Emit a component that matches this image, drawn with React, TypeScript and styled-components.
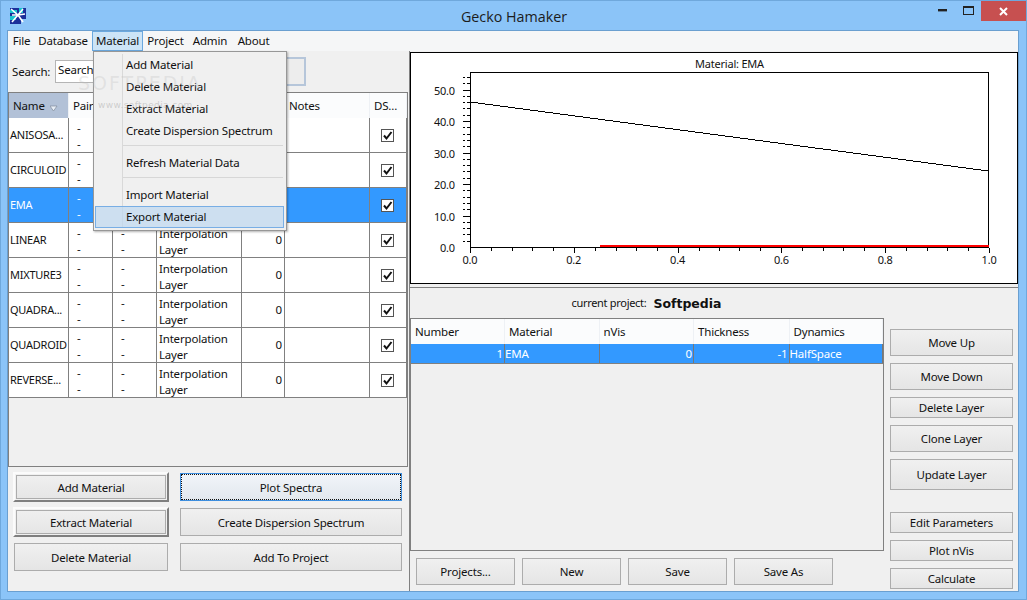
import React from "react";
import styled, { createGlobalStyle } from "styled-components";

const Global = createGlobalStyle`
  html, body { margin: 0; padding: 0; background: #8bc4f8; }
  * { box-sizing: border-box; }
`;

const Window = styled.div`
  width: 1027px; height: 600px; overflow: hidden; position: relative;
  display: flex; flex-direction: column;
  background: #8bc4f8;
  border: 1px solid #6fa8dc;
  font-family: "Noto Sans", Tahoma, sans-serif;
  font-size: 11.5px;
  letter-spacing: -0.18px;
  color: #111;
`;
const TitleBar = styled.div`
  height: 29px; flex: none;
  display: grid; grid-template-columns: 1fr auto 1fr; align-items: center;
  padding-left: 9px;
`;
const TitleText = styled.div`
  font-family: "Open Sans", sans-serif; font-size: 14.3px; letter-spacing: 0; color: #1c1c1c; padding-top: 1px; margin-right: 8px;
`;
const Controls = styled.div`
  justify-self: end; align-self: start; display: flex; align-items: flex-start;
`;
const CtrlIcon = styled.div`
  width: 26px; height: 19px; display: flex; align-items: center; justify-content: center;
`;
const CloseBtn = styled.div`
  width: 45px; height: 20px; background: #c75050; display: flex; align-items: center; justify-content: center;
`;
const Client = styled.div`
  width: 1012px; height: 562px; margin-left: 6px; flex: none;
  border: 1px solid #6a9fd0; background: #f0f0f0;
  display: flex; flex-direction: column;
`;
const MenuBar = styled.div`
  height: 20px; flex: none; background: #f5f6f7; display: flex; align-items: stretch; padding-left: 1px;
`;
const MenuTitle = styled.div<{ $open?: boolean; $w: number }>`
  width: ${(p) => p.$w}px; display: flex; align-items: center; justify-content: center; padding-bottom: 1px;
  background: ${(p) => (p.$open ? "#cce4f7" : "transparent")};
  border: 1px solid ${(p) => (p.$open ? "#6ba8de" : "transparent")};
`;
const Main = styled.div`
  flex: 1; display: flex; min-height: 0;
`;
const LeftPane = styled.div`
  width: 402px; flex: none; display: flex; flex-direction: column;
  border-right: 1px solid #808080;
`;
const SearchRow = styled.div`
  height: 41px; flex: none; display: flex; align-items: center; padding: 0 0 0 4px;
`;
const SearchLabel = styled.span`
  width: 43px;
`;
const SearchInput = styled.div`
  width: 195px; height: 23px; background: #fff; border: 1px solid #b5b5b5; padding: 1px 2px; line-height: 16px;
`;
const SearchButton = styled.div`
  width: 56px; height: 29px; border: 2px solid #b6c6da; background: #ededed;
`;
const TableFrame = styled.div`
  width: 400px; height: 375px; flex: none; border: 1px solid #808080; display: flex; flex-direction: column;
`;
const COLS = "60px 44px 44px 85px 43px 85px 37px";
const HeadRow = styled.div`
  height: 25px; flex: none; display: grid; grid-template-columns: ${COLS}; background: #f0f2f5;
`;
const HeadCell = styled.div<{ $sorted?: boolean }>`
  display: flex; align-items: center; gap: 5px; padding-left: 4px; white-space: nowrap; overflow: hidden;
  background: ${(p) => (p.$sorted ? "#b2c1d7" : "#fbfcfd")};
  border-right: 1px solid #eef1f5;
`;
const SortArrow = styled.svg`
  margin-top: 5px; flex: none;
`;
const Row = styled.div<{ $sel?: boolean }>`
  height: 35px; flex: none; display: grid; grid-template-columns: ${COLS};
  background: ${(p) => (p.$sel ? "#3399ff" : "#fff")};
  color: ${(p) => (p.$sel ? "#fff" : "#111")};
  border-bottom: 1px solid #808080;
`;
const Cell = styled.div<{ $align?: string }>`
  border-right: 1px solid #808080;
  display: flex; align-items: center; overflow: hidden; white-space: nowrap;
  justify-content: ${(p) => p.$align || "flex-start"};
  padding: 0 2px 2px 1px;
`;
const NameCell = styled(Cell)`
  font-size: 11px; letter-spacing: -0.25px;
`;
const DashCell = styled(Cell)`
  flex-direction: column; align-items: flex-start; justify-content: center; padding: 1px 0 0 8px; line-height: 16px;
`;
const TypeCell = styled(Cell)`
  white-space: normal; line-height: 16px; padding: 4px 0 0 2px;
`;
const Check = styled.div`
  width: 13px; height: 13px; background: #fff; border: 1px solid #555; display: flex; align-items: center; justify-content: center; margin-top: 2px;
`;
const BtnCol = styled.div<{ $w: number; $top?: number }>`
  width: ${(p) => p.$w}px; padding-top: ${(p) => p.$top ?? 0}px; display: flex; flex-direction: column; align-items: center;
`;
const Btn = styled.div<{ $h: number; $w?: number; $variant?: string; $after?: number }>`
  height: ${(p) => p.$h}px; width: ${(p) => (p.$w ? p.$w + "px" : "100%")}; flex: none;
  margin-bottom: ${(p) => p.$after ?? 0}px;
  display: flex; align-items: center; justify-content: center; white-space: nowrap; padding-bottom: 1px;
  background: ${(p) => (p.$variant === "focus" ? "linear-gradient(#f1f5f9,#e2e8ee)" : "linear-gradient(#f0f0f0,#e5e5e5)")};
  border: 1px solid ${(p) => (p.$variant === "focus" ? "#3e8ede" : "#acacac")};
  ${(p) => p.$variant === "raised" && `
    border: 2px solid;
    border-color: #fbfbfb #7f7f7f #7f7f7f #fbfbfb;
    box-shadow: inset 0 0 0 1px #f0f0f0, inset 0 0 0 2px #acacac;
  `}
  ${(p) => p.$variant === "focus" && `outline: 1px dotted #111; outline-offset: -2px;`}
`;
const LeftButtons = styled.div`
  flex: 1; display: flex; gap: 11px; padding: 5px 0 0 5px;
  ${Btn} { padding-bottom: 0; }
`;
const RightPane = styled.div`
  flex: 1; display: flex; flex-direction: column; min-width: 0;
`;
const PlotPanel = styled.div`
  height: 237px; flex: none; padding-top: 1px; border-bottom: 1px solid #808080;
`;
const PlotBox = styled.div`
  height: 232px; background: #fff; border: 1px solid #000; overflow: hidden; display: flex;
`;
const Lower = styled.div`
  flex: 1; display: flex; flex-direction: column;
`;
const ProjectLine = styled.div`
  height: 30px; flex: none; display: flex; align-items: center; justify-content: center; gap: 7px; padding-right: 135px;
`;
const ProjectSmall = styled.span`
  font-size: 11px; letter-spacing: -0.3px; padding-bottom: 2px;
`;
const ProjectName = styled.span`
  font-size: 12.5px; font-weight: 700; font-family: "DejaVu Sans", sans-serif; letter-spacing: 0;
`;
const LowerBody = styled.div`
  flex: 1; display: flex;
`;
const LowerLeft = styled.div`
  width: 474px; flex: none; display: flex; flex-direction: column;
`;
const LayerFrame = styled.div`
  height: 233px; flex: none; border: 1px solid #808080; display: flex; flex-direction: column;
`;
const LCOLS = "94px 94.5px 94.5px 95.5px 93.5px";
const LayerHead = styled.div`
  height: 25px; flex: none; display: grid; grid-template-columns: ${LCOLS}; background: #f0f2f5;
`;
const LayerHeadCell = styled.div`
  background: #fbfcfd; border-right: 1px solid #eef1f5; padding-left: 4px; display: flex; align-items: center;
`;
const LayerRow = styled.div`
  height: 20px; flex: none; display: grid; grid-template-columns: ${LCOLS}; background: #3399ff; color: #fff; border-bottom: 1px solid #808080;
`;
const LayerCell = styled.div<{ $right?: boolean }>`
  border-right: 1px solid #777; display: flex; align-items: center;
  justify-content: ${(p) => (p.$right ? "flex-end" : "flex-start")}; padding: 0 1px 0 0;
`;
const BottomRow = styled.div`
  display: flex; gap: 7px; padding: 7px 0 0 6px;
`;
const RightCol = styled.div`
  width: 123px; margin-left: 6px; padding-top: 11px; display: flex; flex-direction: column; align-items: stretch;
`;
const Menu = styled.div`
  position: absolute; left: 92px; top: 50px; width: 194px; height: 180px;
  background: #f0f0f0; border: 1px solid #979797; box-shadow: 1px 1px 2px rgba(0,0,0,.3);
  padding: 2px 2px 2px 1px; z-index: 5;
`;
const MenuGutter = styled.div`
  position: absolute; left: 28px; top: 2px; bottom: 2px; width: 1px; background: #d9d9d9;
`;
const MenuItem = styled.div<{ $active?: boolean }>`
  height: 22px; display: flex; align-items: center; padding: 0 0 2px 30px; position: relative;
  border: 1px solid ${(p) => (p.$active ? "#78aee5" : "transparent")};
  background: ${(p) => (p.$active ? "rgba(190,215,240,.7)" : "transparent")};
`;
const MenuSep = styled.div`
  height: 10px; padding: 3px 1px 0 28px; position: relative;
  &::after { content: ""; display: block; height: 1px; background: #d7d7d7; }
`;
const Watermark = styled.div`
  position: absolute; left: 77px; top: 72px; z-index: 6; pointer-events: none;
  font-family: "DejaVu Sans", sans-serif; font-size: 19px; letter-spacing: 2px; color: rgba(190,190,190,.3); line-height: 20px;
`;
const WatermarkSub = styled.div`
  font-size: 9px; letter-spacing: .4px; line-height: 14px; margin: 5px 0 0 20px; color: rgba(150,150,150,.4);
`;

const materials = ["ANISOSA...", "CIRCULOID", "EMA", "LINEAR", "MIXTURE3", "QUADRA...", "QUADROID", "REVERSE..."];
const hx = [470, 574, 678, 782, 886, 990];
const xl = ["0.0", "0.2", "0.4", "0.6", "0.8", "1.0"];
const yl = ["50.0", "40.0", "30.0", "20.0", "10.0", "0.0"];

function Plot() {
  const ticksX: number[] = [];
  for (let i = 0; i <= 25; i++) ticksX.push(470 + i * 20.8);
  const ticksY: number[] = [];
  for (let i = 1; i <= 27; i++) ticksY.push(247 - i * 6.3);
  return (
    <svg width="607" height="230" viewBox="411 53 607 230" style={{ display: "block" }} shapeRendering="crispEdges">
      <text x="730" y="68" fontSize="11" letterSpacing="-0.2" textAnchor="middle" fontFamily="Noto Sans" fill="#111">Material: EMA</text>
      <rect x="470.5" y="72.5" width="519" height="175" fill="none" stroke="#000" />
      {ticksX.map((x, i) => (
        <line key={i} x1={Math.round(x) + 0.5} x2={Math.round(x) + 0.5} y1="248" y2={i % 5 === 0 ? 253 : 251} stroke="#000" />
      ))}
      {ticksY.map((y, i) => (
        <g key={i}>
          <line x1="463" x2={i % 5 === 4 ? 470 : 465} y1={Math.round(y) + 0.5} y2={Math.round(y) + 0.5} stroke="#000" />
          {i % 5 !== 4 && <line x1="467" x2="470" y1={Math.round(y) + 0.5} y2={Math.round(y) + 0.5} stroke="#000" />}
        </g>
      ))}
      <line x1="471" y1="102" x2="989" y2="171" stroke="#000" strokeWidth="1" />
      <rect x="600" y="245" width="390" height="2" fill="#f00" />
      {xl.map((t, i) => (
        <text key={t} x={hx[i]} y="264" fontSize="11" textAnchor="middle" fontFamily="Noto Sans" fill="#111">{t}</text>
      ))}
      {yl.map((t, i) => (
        <text key={t} x="455" y={95 + i * 31.4} fontSize="11" textAnchor="end" fontFamily="Noto Sans" fill="#111">{t}</text>
      ))}
    </svg>
  );
}

function Logo() {
  return (
    <svg width="16" height="16" viewBox="0 0 16 16" shapeRendering="crispEdges">
      <rect width="16" height="16" fill="#1c2f9a" />
      <rect x="0" y="2" width="7" height="3" fill="#19c4cf" />
      <rect x="0" y="8" width="6" height="4" fill="#19c4cf" />
      <rect x="9" y="0" width="4" height="5" fill="#19c4cf" />
      <rect x="11" y="11" width="5" height="5" fill="#8bc4f8" />
      <path d="M1 1 L8 7 L13 1 M8 7 L15 6 M8 7 L13 14 M8 7 L2 14 M2 7 L8 7" stroke="#fff" strokeWidth="1.6" fill="none" shapeRendering="auto" />
    </svg>
  );
}

export default function App() {
  return (
    <Window>
      <Global />
      <TitleBar>
        <Logo />
        <TitleText>Gecko Hamaker</TitleText>
        <Controls>
          <CtrlIcon>
            <svg width="9" height="3"><rect width="9" height="2.4" fill="#222" /></svg>
          </CtrlIcon>
          <CtrlIcon>
            <svg width="11" height="9"><rect x=".5" y=".5" width="10" height="8" fill="none" stroke="#222" /><rect width="11" height="2" fill="#222" /></svg>
          </CtrlIcon>
          <CloseBtn>
            <svg width="9" height="9" viewBox="0 0 9 9"><path d="M1 1L8 8M8 1L1 8" stroke="#fff" strokeWidth="2" /></svg>
          </CloseBtn>
        </Controls>
      </TitleBar>
      <Client>
        <MenuBar>
          <MenuTitle $w={25}>File</MenuTitle>
          <MenuTitle $w={58}>Database</MenuTitle>
          <MenuTitle $w={51} $open>Material</MenuTitle>
          <MenuTitle $w={45}>Project</MenuTitle>
          <MenuTitle $w={44}>Admin</MenuTitle>
          <MenuTitle $w={43}>About</MenuTitle>
        </MenuBar>
        <Main>
          <LeftPane>
            <SearchRow>
              <SearchLabel>Search:</SearchLabel>
              <SearchInput>Search...</SearchInput>
              <SearchButton />
            </SearchRow>
            <TableFrame>
              <HeadRow>
                <HeadCell $sorted>Name
                  <SortArrow width="8" height="7"><path d="M0 1H7L3.5 6Z" fill="#e8eef6" stroke="#7f8b9b" strokeWidth=".7" /></SortArrow>
                </HeadCell>
                <HeadCell>Pair</HeadCell>
                <HeadCell>Type</HeadCell>
                <HeadCell>Category</HeadCell>
                <HeadCell>nVis</HeadCell>
                <HeadCell>Notes</HeadCell>
                <HeadCell>DS...</HeadCell>
              </HeadRow>
              {materials.map((m) => (
                <Row key={m} $sel={m === "EMA"}>
                  <NameCell>{m}</NameCell>
                  <DashCell><span>-</span><span>-</span></DashCell>
                  <DashCell><span>-</span><span>-</span></DashCell>
                  <TypeCell>Interpolation Layer</TypeCell>
                  <Cell $align="flex-end">0</Cell>
                  <Cell />
                  <Cell $align="center">
                    <Check>
                      <svg width="11" height="11" viewBox="0 0 11 11"><path d="M2 5.5L4.5 8.5L9.5 2" stroke="#111" strokeWidth="2" fill="none" /></svg>
                    </Check>
                  </Cell>
                </Row>
              ))}
            </TableFrame>
            <LeftButtons>
              <BtnCol $w={156}>
                <Btn $h={30} $variant="raised" $after={5}>Add Material</Btn>
                <Btn $h={30} $variant="raised" $after={6}>Extract Material</Btn>
                <Btn $h={28} $w={154}>Delete Material</Btn>
              </BtnCol>
              <BtnCol $w={222} $top={1}>
                <Btn $h={28} $variant="focus" $after={7}>Plot Spectra</Btn>
                <Btn $h={28} $after={7}>Create Dispersion Spectrum</Btn>
                <Btn $h={28}>Add To Project</Btn>
              </BtnCol>
            </LeftButtons>
          </LeftPane>
          <RightPane>
            <PlotPanel>
              <PlotBox><Plot /></PlotBox>
            </PlotPanel>
            <Lower>
              <ProjectLine>
                <ProjectSmall>current project:</ProjectSmall>
                <ProjectName>Softpedia</ProjectName>
              </ProjectLine>
              <LowerBody>
                <LowerLeft>
                  <LayerFrame>
                    <LayerHead>
                      {["Number", "Material", "nVis", "Thickness", "Dynamics"].map((h) => (
                        <LayerHeadCell key={h}>{h}</LayerHeadCell>
                      ))}
                    </LayerHead>
                    <LayerRow>
                      <LayerCell $right>1</LayerCell>
                      <LayerCell>EMA</LayerCell>
                      <LayerCell $right>0</LayerCell>
                      <LayerCell $right>-1</LayerCell>
                      <LayerCell>HalfSpace</LayerCell>
                    </LayerRow>
                  </LayerFrame>
                  <BottomRow>
                    <Btn $h={27} $w={99}>Projects...</Btn>
                    <Btn $h={27} $w={99}>New</Btn>
                    <Btn $h={27} $w={99}>Save</Btn>
                    <Btn $h={27} $w={99}>Save As</Btn>
                  </BottomRow>
                </LowerLeft>
                <RightCol>
                  <Btn $h={27} $after={7}>Move Up</Btn>
                  <Btn $h={27} $after={7}>Move Down</Btn>
                  <Btn $h={21} $after={7}>Delete Layer</Btn>
                  <Btn $h={27} $after={7}>Clone Layer</Btn>
                  <Btn $h={31} $after={22}>Update Layer</Btn>
                  <Btn $h={21} $after={7}>Edit Parameters</Btn>
                  <Btn $h={21} $after={7}>Plot nVis</Btn>
                  <Btn $h={21}>Calculate</Btn>
                </RightCol>
              </LowerBody>
            </Lower>
          </RightPane>
        </Main>
      </Client>
      <Menu>
        <MenuGutter />
        <MenuItem>Add Material</MenuItem>
        <MenuItem>Delete Material</MenuItem>
        <MenuItem>Extract Material</MenuItem>
        <MenuItem>Create Dispersion Spectrum</MenuItem>
        <MenuSep />
        <MenuItem>Refresh Material Data</MenuItem>
        <MenuSep />
        <MenuItem>Import Material</MenuItem>
        <MenuItem $active>Export Material</MenuItem>
      </Menu>
      <Watermark>
        SOFTPEDIA
        <WatermarkSub>www.softpedia.com</WatermarkSub>
      </Watermark>
    </Window>
  );
}
